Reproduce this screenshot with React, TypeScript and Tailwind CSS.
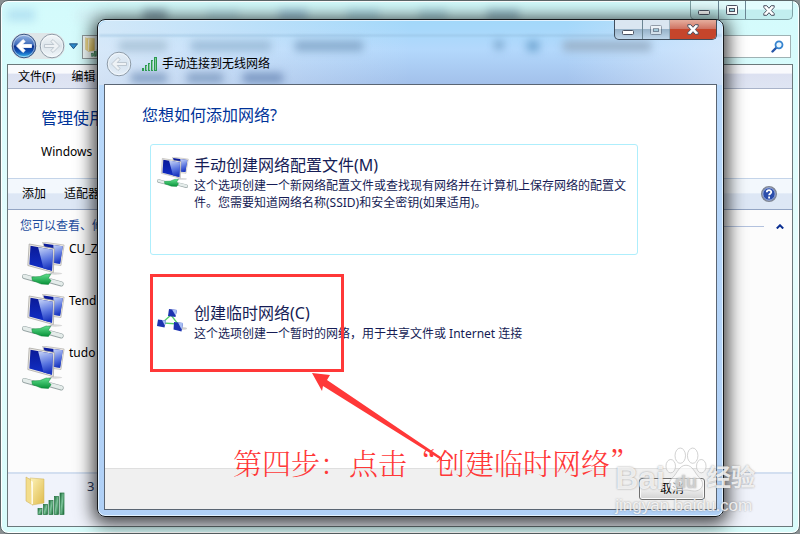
import type { ReactNode } from "react";

const networks = ["CU_Z", "Tend", "tudo"];

const options = [
  {
    id: "manual",
    title: "手动创建网络配置文件(M)",
    text: "这个选项创建一个新网络配置文件或查找现有网络并在计算机上保存网络的配置文件。您需要知道网络名称(SSID)和安全密钥(如果适用)。",
    icon: <ComputersIcon className="h-8 w-8" />,
    active: true,
  },
  {
    id: "adhoc",
    title: "创建临时网络(C)",
    text: "这个选项创建一个暂时的网络，用于共享文件或 Internet 连接",
    icon: <AdHocIcon />,
    active: false,
  },
];

export default function App() {
  return (
    <div className="relative h-screen min-h-[534px] overflow-hidden bg-[#8a9092] font-['Noto_Sans','Noto_Sans_CJK_SC',sans-serif] text-xs text-black">
      <Explorer />
      <Wizard />
      <Annotation />
      <Watermark />
    </div>
  );
}

function Explorer() {
  return (
    <div className="relative flex h-full flex-col rounded-lg border border-[#5c6668] bg-linear-to-b from-[#d3fbfc] via-[#e6fdfd] to-[#d8fcfb] px-1.5 pb-1.5 shadow-[inset_0_0_0_1px_#ffffff]">
      <div className="flex h-8 items-start justify-end">
        <div className="pointer-events-none flex flex-1 gap-10 pt-2 blur-xs">
          <span className="h-3 w-7 bg-[#b5e3f2]" />
          <span className="h-3 w-7 bg-[#d3f2f6]" />
          <span className="h-3 w-6 bg-[#8fb0ba]" />
          <span className="h-3 w-8 bg-[#bfe9f0]" />
          <span className="h-3 w-7 bg-[#a5d0e2]" />
          <span className="h-3 w-8 bg-[#b3e2ec]" />
          <span className="h-3 w-7 bg-[#b0dde5]" />
          <span className="h-3 w-8 bg-[#9fc8d4]" />
        </div>
        <CaptionButtons />
      </div>

      <div className="flex h-[31px] items-start gap-1 pl-1">
        <div className="flex gap-0.5 rounded-full bg-[#dfe6e8]">
          <button type="button" aria-label="Back" className="h-[26px] w-[26px]">
            <ArrowOrb active />
          </button>
          <button type="button" aria-label="Forward" className="h-[26px] w-[26px]">
            <ArrowOrb flip />
          </button>
        </div>
        <button type="button" aria-label="History" className="mt-2.5">
          <svg width="9" height="7" viewBox="0 0 10 7">
            <path d="M.5.5h9L5 6z" fill="#2f8ccb" stroke="#184a7c" />
          </svg>
        </button>
        <div className="mt-0.5 flex h-6 flex-1 items-center border border-[#8f9a9c] bg-[#f4fdfc] pl-0.5">
          <FolderSignalIcon className="h-5 w-5" />
        </div>
        <label className="mt-0.5 mr-0.5 flex h-[23px] w-[230px] items-center border border-[#9fb2b4] bg-white px-1.5">
          <input aria-label="Search" className="min-w-0 flex-1 outline-none" />
          <svg width="13" height="13" viewBox="0 0 13 13" fill="none">
            <path d="M1.5 11.5 5 8" stroke="#2756a8" strokeWidth="2.4" strokeLinecap="round" />
            <circle cx="8" cy="4.8" r="3.5" fill="#e9f6ff" stroke="#3684cf" strokeWidth="1.8" />
          </svg>
        </label>
      </div>

      <div className="flex min-h-0 flex-1 flex-col border border-[#6b787b] bg-[#fcfcfc]">
        <nav className="flex h-6 shrink-0 items-center gap-4 border-b border-[#a9b3c9] bg-linear-to-b from-[#f9fafd] from-35% via-[#dce1f1] via-40% to-[#dfe5f3] pl-2.5">
          <button type="button">文件(F)</button>
          <button type="button">编辑</button>
        </nav>
        <header className="h-[89px] shrink-0 bg-white px-[33px] pt-[17px]">
          <h1 className="text-base leading-6 text-[#003399]">管理使用</h1>
          <p className="mt-3.5 leading-4">Windows</p>
        </header>
        <div className="flex h-8 shrink-0 items-center gap-[18px] border-t border-b border-t-[#c4d4e9] border-b-[#93a5c4] bg-linear-to-b from-[#f3f8fd] from-45% to-[#dde7f5] to-50% pr-[15px] pl-3.5">
          <button type="button">添加</button>
          <button type="button" className="flex-1 text-left">适配器</button>
          <button type="button" aria-label="Help">
            <svg width="16" height="16" viewBox="0 0 16 16">
              <circle cx="8" cy="8" r="7.3" fill="#2a4cab" stroke="#808793" strokeWidth="1.4" />
              <circle cx="8" cy="8" r="6.2" fill="none" stroke="#d9e1f2" strokeWidth=".7" />
              <path d="M5.8 6.2c0-2.600 4.500-2.600 4.500-.2 0 1.700-2.200 1.700-2.200 3.200M8.100 10.600v1.800" fill="none" stroke="#fff" strokeWidth="1.800" />
            </svg>
          </button>
        </div>

        <main className="flex-1 pt-2">
          <div className="flex h-4 items-center gap-3 pr-2 pl-3">
            <h2 className="text-[#1f4e9f]">您可以查看、修</h2>
            <span className="h-px flex-1 bg-[#b3c2de]" />
            <button type="button" aria-label="Collapse">
              <svg width="8" height="5" viewBox="0 0 8 5">
                <path d="M.8 4.5 4 1.3l3.2 3.2" fill="none" stroke="#0b2f91" strokeWidth="2" />
              </svg>
            </button>
          </div>
          <ul className="pt-1.5 pl-3.5">
            {networks.map((name) => (
              <li key={name} className="flex h-[52px] items-start gap-1">
                <ComputersIcon className="mt-0.5 h-[46px] w-[43px]" />
                <span className="leading-[18px]">{name}</span>
              </li>
            ))}
          </ul>
        </main>

        <footer className="flex h-[54px] shrink-0 items-start gap-[22px] border-t-2 border-[#d3dff0] bg-[#f0f3fb] pt-0.5 pl-[17px]">
          <FolderSignalIcon className="h-10 w-10" />
          <span className="mt-0.5 text-[13px] leading-4 text-[#27385e]">3</span>
        </footer>
      </div>
    </div>
  );
}

function Wizard() {
  return (
    <div
      role="dialog"
      aria-label="手动连接到无线网络"
      className="absolute top-[19px] right-[76px] bottom-[17px] left-[97px] flex flex-col rounded-lg border border-[#16191c] bg-linear-to-b from-[#a9dbfa] from-0% via-[#b9d9fb] via-10% to-[#b0d0f6] px-1.5 pb-1.5 shadow-[0_3px_18px_4px_rgba(0,0,0,0.75),inset_0_0_0_1px_#e2f2ff]"
    >
      <div className="pointer-events-none absolute inset-x-px top-px h-16 overflow-hidden rounded-t-lg">
        <div className="h-full bg-linear-to-b from-[#a2d8fa] via-[#b3d8fc] via-45% to-[#a2c0ea]" />
        <div className="absolute inset-0 bg-linear-to-r from-[#e6eff8]/70 to-transparent to-50%" />
        <div className="absolute inset-0 bg-linear-to-l from-[#e0ecfb]/70 to-transparent to-25%" />
        <div className="absolute inset-x-0 top-3.5 h-px bg-[#8fbbdc] blur-[1px]" />
        <div className="absolute inset-x-3 top-5 flex gap-6 blur-xs">
          <span className="ml-2 h-2.5 w-12 bg-[#a9c3d8]" />
          <span className="h-2.5 w-20 bg-[#9bbbd8]" />
          <span className="h-2.5 w-17 bg-[#86a9cb]" />
          <span className="ml-27 h-2 w-2 bg-[#6f9cc4]" />
          <span className="h-2.5 w-3 bg-[#6ea4cf]" />
          <span className="h-2.5 w-22 bg-[#98b0c8]" />
        </div>
        <div className="absolute top-13 left-8 flex gap-5 blur-xs">
          <span className="h-2.5 w-9 bg-[#86a2c6]" />
          <span className="h-2.5 w-9 bg-[#86a2c6]" />
          <span className="h-2.5 w-10 bg-[#7895c0]" />
        </div>
      </div>

      <div className="relative flex h-16 shrink-0 items-end justify-between">
        <div className="flex items-center pb-[7px] pl-0.5">
          <button type="button" aria-label="Back" className="h-[26px] w-[26px]">
            <ArrowOrb />
          </button>
          <SignalIcon className="ml-2.5 h-3.5 w-4" />
          <h2 className="ml-1 leading-4">手动连接到无线网络</h2>
        </div>
        <div className="self-start">
          <CaptionButtons glass />
        </div>
      </div>

      <div className="relative flex min-h-0 flex-1 flex-col border border-[#5a6573] bg-white">
        <main className="flex-1 pt-[18px] pr-[78px] pl-[45px]">
          <h1 className="-ml-2 text-base leading-6 text-[#003399]">您想如何添加网络?</h1>
          <div className="mt-[17px] flex flex-col gap-[37px]">
            {options.map((o) => (
              <OptionCard key={o.id} {...o} />
            ))}
          </div>
        </main>
        <footer className="flex h-[41px] shrink-0 justify-end border-t border-[#dfdfdf] bg-[#f0f0f0] pt-[9px] pr-[11px]">
          <button
            type="button"
            className="h-[22px] w-[66px] rounded-[3px] border border-[#707070] bg-linear-to-b from-[#f2f2f2] from-45% to-[#d2d2d2] shadow-[inset_0_0_0_1px_#fbfbfb]"
          >
            取消
          </button>
        </footer>
      </div>
    </div>
  );
}

function OptionCard({ title, text, icon, active }: { title: string; text: string; icon: ReactNode; active: boolean }) {
  return (
    <button
      type="button"
      className={`flex w-full items-start gap-1.5 rounded-[3px] border pt-2 pr-2.5 pl-1.5 text-left text-[#151c55] ${
        active ? "h-[111px] border-[#aeeefc]" : "h-[70px] border-transparent"
      }`}
    >
      <span className="mt-1 flex w-[31px] shrink-0">{icon}</span>
      <span className="flex-1">
        <span className="block text-base leading-6">{title}</span>
        <span className="block leading-[17px]">{text}</span>
      </span>
    </button>
  );
}

function CaptionButtons({ glass }: { glass?: boolean }) {
  return (
    <div
      className={`flex overflow-hidden rounded-b-[5px] border border-t-0 ${
        glass
          ? "h-5 border-[#3f4d5c] bg-linear-to-b from-[#dae6f1] from-45% via-[#98b3c9] via-50% to-[#bfd6ea]"
          : "h-[19px] border-[#7fa2a6] bg-linear-to-b from-[#e3fcfd] from-45% to-[#c2eeef] to-50%"
      }`}
    >
      <button type="button" aria-label="Minimize" className="flex w-7 items-center justify-center border-r border-[#6b8593]">
        <svg width="13" height="12" viewBox="0 0 13 12">
          <rect x=".5" y="6.5" width="11" height="4" rx="1" fill="#fff" stroke="#4b5262" />
        </svg>
      </button>
      <button
        type="button"
        aria-label="Maximize"
        className={`flex w-[27px] items-center justify-center border-r border-[#6b8593] ${glass ? "opacity-50" : ""}`}
      >
        <svg width="12" height="10" viewBox="0 0 12 10">
          <rect x=".5" y=".5" width="11" height="9" rx="1" fill="#fff" stroke="#4b5262" />
          <rect x="3.5" y="3.5" width="5" height="3" fill="#a8dce6" stroke="#4b5262" />
        </svg>
      </button>
      <button
        type="button"
        aria-label="Close"
        className={`flex w-[46px] items-center justify-center ${
          glass ? "bg-linear-to-b from-[#e3a898] from-5% via-[#cf7464] via-45% to-[#c5452b] to-50%" : ""
        }`}
      >
        <svg width="12" height="11" viewBox="0 0 12 11">
          <path
            d="M.8.7h3L6 3.3 8.2.7h3v1.6L8.4 5.5l2.8 3.1v1.7h-3L6 7.7l-2.2 2.6h-3V8.6l2.8-3.1L.8 2.3z"
            fill="#fff"
            stroke="#4b5262"
          />
        </svg>
      </button>
    </div>
  );
}

function ArrowOrb({ active, flip }: { active?: boolean; flip?: boolean }) {
  return (
    <svg viewBox="0 0 26 26" className={`h-full w-full ${flip ? "-scale-x-100" : ""}`}>
      <defs>
        <linearGradient id="orb-blue" x1="0" y1="0" x2="0" y2="1">
          <stop offset="0" stopColor="#9dbbe6" />
          <stop offset=".46" stopColor="#3a68b8" />
          <stop offset=".5" stopColor="#0b2f8c" />
          <stop offset=".75" stopColor="#1257b8" />
          <stop offset="1" stopColor="#3fc4f4" />
        </linearGradient>
        <linearGradient id="orb-pale" x1="0" y1="0" x2="0" y2="1">
          <stop offset="0" stopColor="#f4f8fa" />
          <stop offset=".5" stopColor="#dbe4ea" />
          <stop offset="1" stopColor="#f3f8fb" />
        </linearGradient>
      </defs>
      <circle
        cx="13"
        cy="13"
        r="11.8"
        fill={active ? "url(#orb-blue)" : "url(#orb-pale)"}
        fillOpacity={active || flip ? 1 : 0.6}
        stroke={active ? "#3c5580" : "#8d9aa6"}
      />
      <circle cx="13" cy="13" r="10.7" fill="none" stroke="#fff" strokeOpacity=".5" />
      {/* rounded join keeps the arrow soft at this size */}
      <path
        d="M5.500 13l6.500-6.500 2.200 2-3 3h9.300v3h-9.300l3 3-2.200 2z"
        fill={active ? "#fff" : "#eef2f5"}
        stroke={active ? "#fff" : "#b4bec7"}
        strokeWidth=".8"
        strokeLinejoin="round"
      />
    </svg>
  );
}

function SignalIcon({ className }: { className: string }) {
  return (
    <svg viewBox="0 0 16 14" className={className}>
      <g fill="#2c9a50">
        <rect x="0" y="11" width="2" height="3" />
        <rect x="3" y="8" width="2" height="6" />
        <rect x="6" y="6" width="2" height="8" />
        <rect x="9" y="3" width="2" height="11" />
        <rect x="12" y="0" width="3" height="14" />
      </g>
      <path d="M4.500 9v4M7.500 7v6M10.500 4v9M13.500 1v12" stroke="#9bd8ac" strokeWidth=".8" />
    </svg>
  );
}

function FolderSignalIcon({ className }: { className: string }) {
  return (
    <svg viewBox="0 0 40 40" className={className}>
      <defs>
        <linearGradient id="folder-front" x1="0" y1="0" x2="1" y2="1">
          <stop offset="0" stopColor="#fdf3ba" />
          <stop offset="1" stopColor="#dfbb4b" />
        </linearGradient>
        <linearGradient id="bar-green" x1="0" y1="0" x2="1" y2="1">
          <stop offset="0" stopColor="#1b6b3a" />
          <stop offset=".5" stopColor="#7cc49a" />
          <stop offset="1" stopColor="#156a33" />
        </linearGradient>
      </defs>
      <path d="M5 2l14 1v24L7 29z" fill="url(#folder-front)" stroke="#cfb25a" strokeWidth=".5" />
      <path d="M1 1l5 3 1.500 25L1 25z" fill="#f3dd8c" stroke="#c9aa50" strokeWidth=".5" />
      <path d="M6 4l2 2v22l-1.500 1z" fill="#fffbe6" />
      <g fill="url(#bar-green)" stroke="#23733f" strokeWidth=".7">
        <rect x="13" y="32.500" width="4" height="6" />
        <rect x="18.500" y="28.500" width="4" height="10" />
        <rect x="24" y="24.500" width="4" height="14" />
        <rect x="29.500" y="20.500" width="4" height="18" />
        <rect x="35" y="17" width="4" height="21.500" />
      </g>
    </svg>
  );
}

function ComputersIcon({ className }: { className: string }) {
  return (
    <svg viewBox="0 0 48 46" preserveAspectRatio="none" className={`shrink-0 ${className}`}>
      <defs>
        <linearGradient id="screen-front" x1="0" y1="0" x2="0" y2="1">
          <stop offset="0" stopColor="#0a1a98" />
          <stop offset="1" stopColor="#1230c8" />
        </linearGradient>
        <linearGradient id="screen-shine" x1="0" y1="0" x2=".2" y2="1">
          <stop offset="0" stopColor="#c9d6f8" />
          <stop offset=".6" stopColor="#5a76e0" />
          <stop offset="1" stopColor="#1c38c0" />
        </linearGradient>
        <linearGradient id="plug" x1="0" y1="0" x2="0" y2="1">
          <stop offset="0" stopColor="#5fe08c" />
          <stop offset="1" stopColor="#089038" />
        </linearGradient>
      </defs>
      <ellipse cx="37" cy="31.500" rx="8" ry="1.200" fill="#d9d9d9" />
      <path d="M23 0L47 3l-3.500 20.500L30 22z" fill="#eeebe4" stroke="#a5a39f" strokeWidth=".6" />
      <path d="M24 1.500L45.500 4.200l-3 17.500L30 20z" fill="url(#screen-front)" />
      <path d="M35 3L45.500 4.200l-3 17.500-7-.7z" fill="url(#screen-shine)" />
      <path d="M8 2l28 4.500-1 24L6.500 23.500z" fill="#eeebe4" stroke="#9b9995" strokeWidth=".7" />
      <path d="M9.500 3.800l25 4-1 21L8.200 22.600z" fill="url(#screen-front)" />
      <path d="M18 5.200l16.500 2.600-1 21L24 26.500z" fill="url(#screen-shine)" />
      <path d="M33 31l-5 4" stroke="#a9b0b4" strokeWidth="1.200" />
      <path d="M2.500 34.500l12 3M32 39l12 3" stroke="#96a3a3" strokeWidth="5" strokeLinecap="round" />
      <path d="M2.500 34.300l12 3M32 38.800l12 3" stroke="#e4ecea" strokeWidth="3.600" strokeLinecap="round" />
      <path d="M11 35l9-.500 7-2.500 5 .5-2.500 3.500 3 2.500-3 4-8-.5-10-3.500z" fill="url(#plug)" stroke="#0a7f34" strokeWidth=".5" />
    </svg>
  );
}

function AdHocIcon() {
  return (
    <svg viewBox="0 0 30 24" className="mt-1 h-6 w-[30px]">
      <path d="M14 6L5 14l16 1z" fill="none" stroke="#54cf68" strokeWidth="1.300" />
      <ellipse cx="26" cy="19.500" rx="4" ry="1.200" fill="#cfcfcf" />
      <path d="M12 0l8 1-1.500 7-7.500-1z" fill="#1c33b0" />
      <path d="M1 10.500l8 1-1.500 7L0 17z" fill="#1c33b0" />
      <path d="M17 13l9 1-1.500 8.500-8-2z" fill="#1c33b0" />
      <path d="M15 .4l5 .6-1.300 5.800z M5 11l4 .5-1.200 5z M21 13.500l5 .5-1.400 6.400z" fill="#a9bff4" />
    </svg>
  );
}

function Annotation() {
  return (
    <div className="pointer-events-none absolute inset-0 text-[#ff3838]">
      <div className="absolute top-[274px] left-[150px] h-[98px] w-[194px] border-3 border-[#ff3838]" />
      <svg width="130" height="90" viewBox="0 0 130 90" className="absolute top-[372px] left-[312px]">
        <path d="M0 1l18 2-3 5 117 79-1 2L11 14l-1 5z" fill="#ff3838" />
      </svg>
      <p className="absolute top-[443px] left-[233px] font-['Noto_Serif_CJK_SC','Noto_Sans_CJK_SC',serif] text-[29px] leading-10 font-light whitespace-nowrap">
        第四步：点击“创建临时网络”
      </p>
    </div>
  );
}

function Watermark() {
  return (
    <div className="pointer-events-none absolute right-[45px] bottom-4 text-white/80 text-shadow-[0_0_2px_rgba(110,110,110,0.7)]">
      <div className="flex items-end font-['Liberation_Sans','Noto_Sans_CJK_SC',sans-serif] font-bold">
        <span className="text-[32px] leading-8">Bai</span>
        <span className="relative flex h-12 w-[42px] items-end justify-center">
          <svg viewBox="0 0 44 48" className="absolute inset-0 h-full w-full" fill="#fff" fillOpacity=".6" stroke="#bbb" strokeOpacity=".7">
            <ellipse cx="6" cy="20" rx="5" ry="7" />
            <ellipse cx="16" cy="9" rx="5.500" ry="8" />
            <ellipse cx="29" cy="9" rx="5.500" ry="8" />
            <ellipse cx="38" cy="20" rx="5" ry="7" />
            <path d="M22 19c7 0 9 8 14 13 7 7 2 14-5 14-4 0-6-1-9-1s-5 1-9 1c-8 0-12-8-5-14 5-5 7-13 14-13z" />
          </svg>
          <span className="relative text-lg leading-6 text-[#d9d9d9]/80">du</span>
        </span>
        <span className="text-2xl leading-8">经验</span>
      </div>
      <div className="font-['Liberation_Sans',sans-serif] text-[17px] leading-6">jingyan.baidu.com</div>
    </div>
  );
}
